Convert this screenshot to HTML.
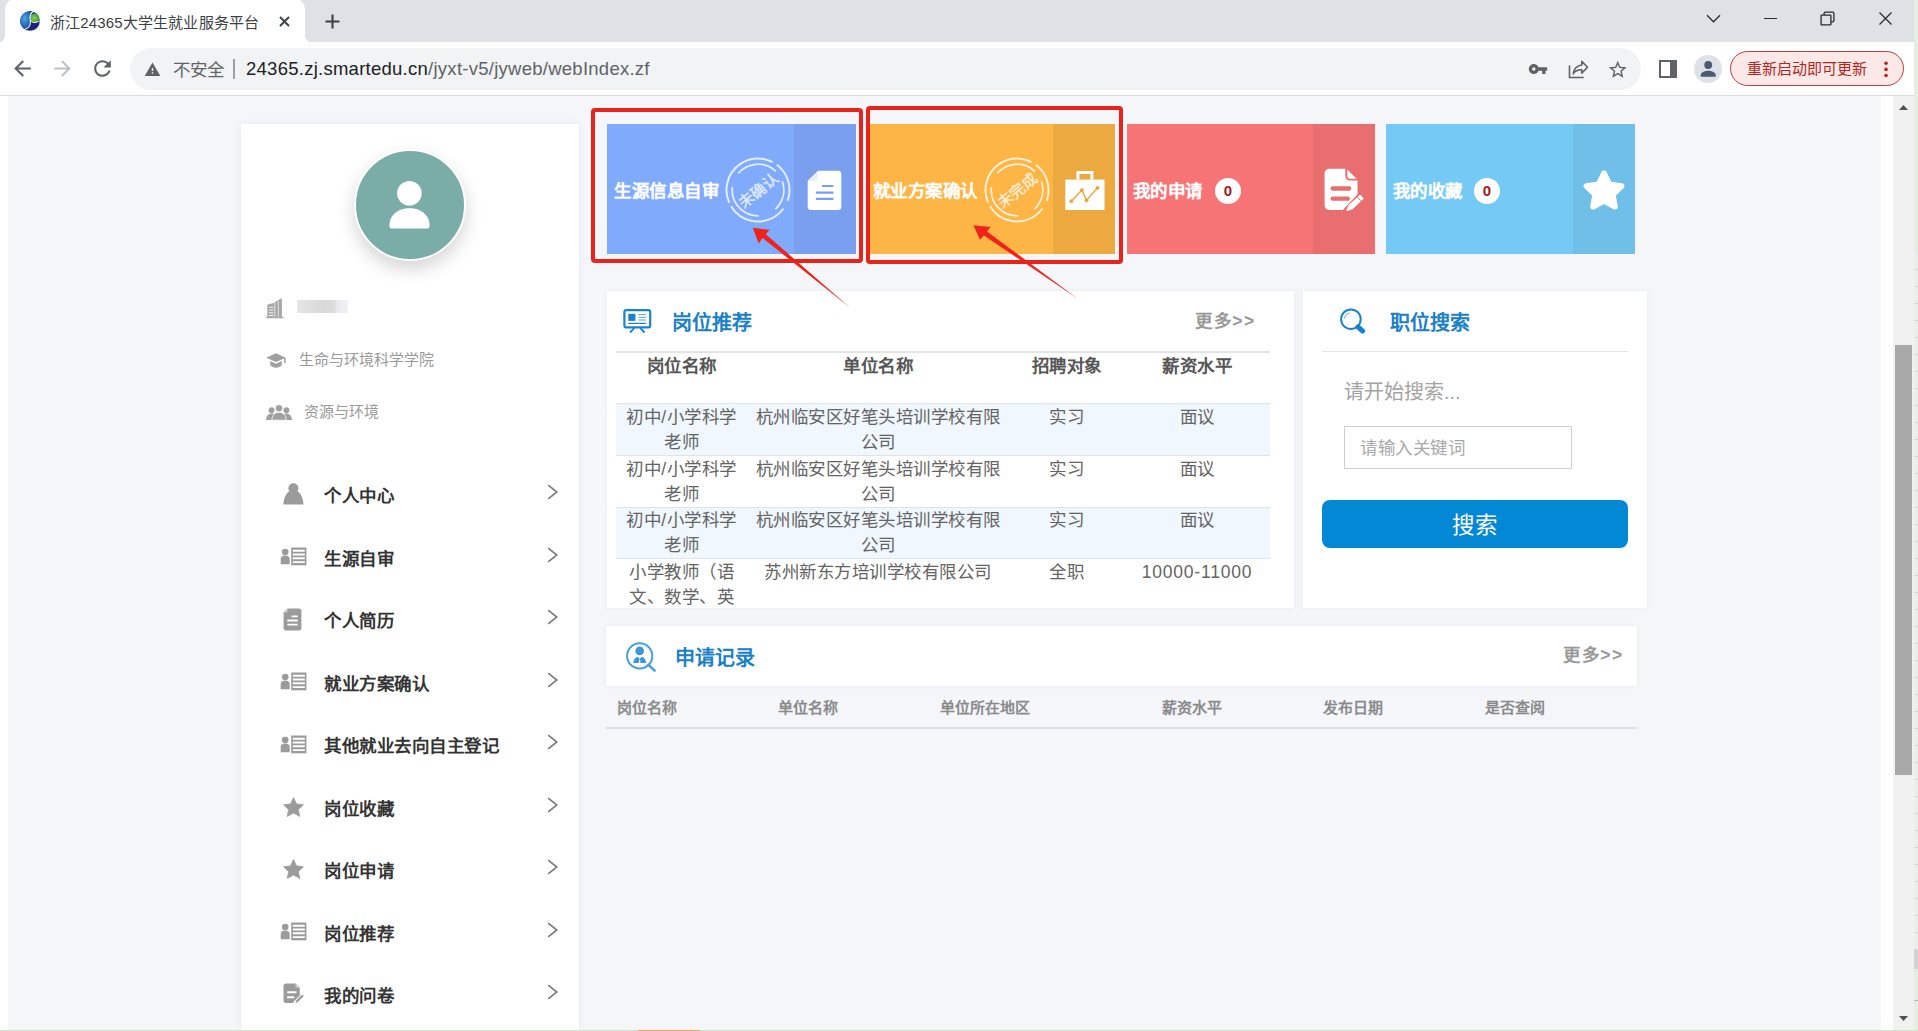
<!DOCTYPE html>
<html lang="zh-CN">
<head>
<meta charset="utf-8">
<title>浙江24365大学生就业服务平台</title>
<style>
*{box-sizing:border-box}
html,body{margin:0;padding:0}
body{width:1918px;height:1031px;overflow:hidden;position:relative;background:#fff;font-family:"Liberation Sans",sans-serif;color:#333}
.abs{position:absolute}
svg{display:block;position:absolute;overflow:visible}

/* ---------- browser chrome ---------- */
#tabstrip{left:0;top:0;width:1914px;height:43px;background:#dee1e6}
#tab{left:5px;top:-1px;width:300px;height:44px;background:#fff;border-radius:10px 10px 0 0}
#tab:before,#tab:after{content:"";position:absolute;bottom:0;width:8px;height:8px}
#tab:before{left:-8px;background:radial-gradient(circle at 0 0,transparent 7.5px,#fff 8.5px)}
#tab:after{right:-8px;background:radial-gradient(circle at 100% 0,transparent 7.5px,#fff 8.5px)}
#tabtitle{left:50px;top:13px;font-size:15px;letter-spacing:.15px;line-height:20px;color:#3c4043;white-space:nowrap}
#toolbar{left:0;top:42px;width:1914px;height:53px;background:#fff}
#tbline{left:0;top:95px;width:1914px;height:1px;background:#dcdcdc}
#omni{left:130px;top:48px;width:1511px;height:42px;border-radius:21px;background:#f1f3f4}
#insecure{left:173px;top:59px;font-size:17.5px;line-height:22px;color:#5f6368;white-space:nowrap}
#url{left:246px;top:57px;font-size:18.5px;line-height:24px;letter-spacing:.26px;color:#202124;white-space:nowrap}
#url span{color:#5f6368}
#avatarbtn{left:1694px;top:55px;width:28px;height:28px;border-radius:50%;background:#dee1e6}
#update{left:1730px;top:51px;width:174px;height:35px;border-radius:18px;border:1.5px solid #b8403b;background:#fce8e6}
#updatetxt{left:1747px;top:59px;font-size:15px;line-height:20px;color:#b3261e;white-space:nowrap}
#rightstrip{left:1914px;top:0;width:4px;height:1031px;background:#e4efdf}
#rightstrip2{left:1914px;top:253.400px;width:4px;height:697px;background:repeating-linear-gradient(180deg,#eceeec 0,#eceeec 16px,#d4d6d4 16px,#d4d6d4 17px)}
#bottomstrip{left:0;top:1029.500px;width:1918px;height:1.500px;background:#d4e6c8}

/* ---------- page ---------- */
#page{left:0;top:96px;width:1914px;height:935px;background:#fff;overflow:hidden}
#pagebg{left:8px;top:0;width:1873px;height:935px;background:#f4f6fa}
#sbtrack{left:1893px;top:0;width:21px;height:935px;background:#f1f1f1}
#sbthumb{left:1895px;top:249px;width:17px;height:430px;background:#a8a8a8}

/* sidebar */
#side{left:241px;top:124px;width:338px;height:910px;background:#fff;box-shadow:0 0 6px rgba(100,120,135,.11)}
#avatar{left:113px;top:25px;width:112px;height:112px;border-radius:50%;background:#7aada8;border:2px solid #fff;box-shadow:0 8px 18px rgba(0,0,0,.17)}
.info{left:58px;font-size:15px;line-height:20px;color:#999;white-space:nowrap}
#redact{left:56px;top:176px;width:51px;height:13px;background:linear-gradient(90deg,#e6e6e6 0,#dedede 28%,#d9d9d9 52%,#dddcdc 74%,#e9e9ee 78%,#f1f1f5 100%)}
.mi{left:0;width:338px;height:62px}
.mi .t{position:absolute;left:83px;top:22px;letter-spacing:.5px;font-size:17.5px;line-height:22px;font-weight:bold;color:#333;white-space:nowrap}

/* cards */
.card{top:124px;height:130px;width:250px}
.card .dk{position:absolute;right:0;top:0;width:62px;height:130px}
.card .t{position:absolute;left:7px;top:55.600px;letter-spacing:.5px;font-size:17.5px;line-height:22px;font-weight:bold;color:#fff;white-space:nowrap;text-shadow:0 0 1px rgba(255,255,255,.6)}
.badge{position:absolute;top:53.500px;width:26px;height:26px;border-radius:50%;background:#fff;color:#a4191c;font-weight:bold;font-size:15px;line-height:26px;text-align:center}
.redbox{border:4.400px solid #e8231c;border-radius:4px}

/* panels */
.panel{background:#fff;box-shadow:0 0 4px rgba(100,120,135,.09)}
.ptitle{font-size:20px;line-height:26px;font-weight:bold;color:#1b80c4;white-space:nowrap}
.more{font-size:17.5px;line-height:22px;font-weight:bold;color:#999;white-space:nowrap;letter-spacing:1.6px}
#jobs table{position:absolute;left:9px;top:59.7px;width:654px;border-collapse:collapse;table-layout:fixed;border-top:2px solid #e4e4e4}
#jobs th{font-size:17.5px;line-height:25px;letter-spacing:.5px;font-weight:bold;color:#555;height:52px;vertical-align:top;padding:1px 0 0;text-align:center}
#jobs td{font-size:17.5px;line-height:25px;letter-spacing:.5px;color:#646464;vertical-align:top;padding:.7px 6px 0;text-align:center;border-top:1px solid #dde3ea;height:51.2px}
#jobs tr.sh td{background:#f0f7fe}
#rec th{position:absolute;top:0}
.rh{top:697.5px;font-size:15px;line-height:20px;font-weight:bold;color:#8a8a8a;white-space:nowrap}
</style>
</head>
<body>

<!-- browser chrome -->
<div id="tabstrip" class="abs"></div>
<div id="tab" class="abs"></div>
<div id="tabtitle" class="abs">浙江24365大学生就业服务平台</div>
<div id="toolbar" class="abs"></div>
<div id="tbline" class="abs"></div>
<div id="omni" class="abs"></div>
<div id="insecure" class="abs">不安全</div>
<div id="url" class="abs">24365.zj.smartedu.cn<span>/jyxt-v5/jyweb/webIndex.zf</span></div>
<div id="avatarbtn" class="abs"></div>
<div id="update" class="abs"></div>
<div id="updatetxt" class="abs">重新启动即可更新</div>


<!-- chrome icons -->
<svg style="left:20px;top:11px" width="20" height="20" viewBox="0 0 20 20">
  <defs>
    <radialGradient id="fg1" cx="35%" cy="40%" r="60%"><stop offset="0" stop-color="#4aa8e8"/><stop offset="1" stop-color="#164f9c"/></radialGradient>
    <radialGradient id="fg2" cx="45%" cy="50%" r="60%"><stop offset="0" stop-color="#8fd04a"/><stop offset="1" stop-color="#2f9a2f"/></radialGradient>
  </defs>
  <rect x="0" y="0" width="20" height="20" fill="#f4f5fb"/>
  <circle cx="10" cy="10" r="9.8" fill="#1c2478"/>
  <path d="M12.8.6C6.5-1 .2 3.600 .2 10c0 3.400 1.700 6.300 4.600 8.100 2.500-.6 4.200-2.300 4.800-4.700.5-2.200-.6-4.400 0-6.600C10.200 4.100 11.300 1.800 12.800.6z" fill="url(#fg1)"/>
  <circle cx="14.6" cy="7" r="4.6" fill="url(#fg2)"/>
  <path d="M13.200.5C11 2 10 4.300 10 6.800c0 2.100.7 4 .2 6.200-.5 2.300-2.200 4.300-5.200 5.300" fill="none" stroke="#fff" stroke-width="1.100"/>
  <path d="M10.300 9.200c1.400 2.300 4.600 3.400 9.300.7" fill="none" stroke="#fff" stroke-width="1"/>
</svg>
<svg style="left:279px;top:16px" width="11" height="11" viewBox="0 0 11 11"><path d="M1 1l9 9M10 1l-9 9" stroke="#3c4043" stroke-width="1.900" fill="none"/></svg>
<svg style="left:325px;top:14px" width="15" height="15" viewBox="0 0 15 15"><path d="M7.500 .5v14M.5 7.500h14" stroke="#3c4043" stroke-width="2.100" fill="none"/></svg>
<svg style="left:10px;top:56px" width="25" height="25" viewBox="0 0 24 24"><path fill="#5f6368" d="M20 11H7.830l5.590-5.590L12 4l-8 8 8 8 1.410-1.410L7.830 13H20v-2z"/></svg>
<svg style="left:50px;top:56px" width="25" height="25" viewBox="0 0 24 24"><path fill="#bdc1c6" d="M12 4l-1.410 1.410L16.170 11H4v2h12.170l-5.580 5.590L12 20l8-8z"/></svg>
<svg style="left:90px;top:56px" width="25" height="25" viewBox="0 0 24 24"><path fill="#5f6368" d="M17.650 6.350C16.200 4.900 14.210 4 12 4c-4.420 0-7.990 3.580-7.990 8s3.570 8 7.990 8c3.730 0 6.840-2.550 7.730-6h-2.080c-.82 2.330-3.040 4-5.650 4-3.310 0-6-2.690-6-6s2.690-6 6-6c1.660 0 3.140.69 4.220 1.780L13 11h7V4l-2.350 2.350z"/></svg>
<svg style="left:144px;top:61px" width="17" height="17" viewBox="0 0 24 24"><path fill="#5f6368" d="M1 21h22L12 2 1 21zm12-3h-2v-2h2v2zm0-4h-2v-4h2v4z"/></svg>
<div class="abs" style="left:233px;top:59px;width:2px;height:20px;background:#9aa0a6"></div>
<svg style="left:1528px;top:59px" width="20" height="20" viewBox="0 0 24 24"><path fill="#5f6368" d="M12.650 10C11.830 7.670 9.610 6 7 6c-3.310 0-6 2.690-6 6s2.690 6 6 6c2.610 0 4.830-1.670 5.650-4H17v4h4v-4h2v-4H12.650zM7 14c-1.100 0-2-.9-2-2s.9-2 2-2 2 .9 2 2-.9 2-2 2z"/></svg>
<svg style="left:1568px;top:60px" width="21" height="19" viewBox="0 0 21 19"><path d="M1.500 5.500v12h14.200" fill="none" stroke="#5f6368" stroke-width="1.600"/><path d="M13.800 1.300l5.700 5.900-5.700 5.900V9.800c-4-.1-6.700 1.100-8.600 4 .6-4.600 3.300-8.100 8.600-8.800z" fill="none" stroke="#5f6368" stroke-width="1.600" stroke-linejoin="round"/></svg>
<svg style="left:1607px;top:59px" width="21.500" height="21.500" viewBox="0 0 24 24"><path fill="#5f6368" d="M22 9.240l-7.190-.62L12 2 9.190 8.630 2 9.240l5.460 4.730L5.820 21 12 17.270 18.180 21l-1.630-7.030L22 9.240zM12 15.400l-3.760 2.270 1-4.280-3.320-2.880 4.380-.38L12 6.100l1.710 4.040 4.380.38-3.320 2.880 1 4.280L12 15.400z"/></svg>
<div class="abs" style="left:1659px;top:60px;width:18px;height:17.500px;border:2.200px solid #5f6368;border-right-width:7px"></div>
<svg style="left:1694px;top:55px" width="28" height="28" viewBox="0 0 28 28"><circle cx="14.200" cy="10" r="3.900" fill="#4a5a72"/><path d="M6.700 21.700v-1.700c0-2.800 5-4.200 7.500-4.200s7.500 1.400 7.500 4.200v1.700z" fill="#4a5a72"/></svg>
<svg style="left:1883px;top:61px" width="6" height="17" viewBox="0 0 6 17"><circle cx="3" cy="2.300" r="1.800" fill="#b3261e"/><circle cx="3" cy="8.400" r="1.800" fill="#b3261e"/><circle cx="3" cy="14.500" r="1.800" fill="#b3261e"/></svg>
<svg style="left:1706px;top:14px" width="15" height="9" viewBox="0 0 15 9"><path d="M1 1.300l6.500 6.500L14 1.300" fill="none" stroke="#2b2b2b" stroke-width="1.300"/></svg>
<div class="abs" style="left:1764px;top:18px;width:13px;height:1.300px;background:#2b2b2b"></div>
<svg style="left:1820px;top:11px" width="15" height="15" viewBox="0 0 15 15"><rect x="1.100" y="4.100" width="9.800" height="9.800" rx=".6" fill="none" stroke="#2b2b2b" stroke-width="1.300"/><path d="M4.100 4V2.400c0-.7.600-1.300 1.300-1.300h7.200c.7 0 1.300.6 1.300 1.300v7.200c0 .7-.6 1.300-1.300 1.300H11" fill="none" stroke="#2b2b2b" stroke-width="1.300"/></svg>
<svg style="left:1879px;top:12px" width="13" height="13" viewBox="0 0 13 13"><path d="M.5.5l12 12M12.500.5l-12 12" stroke="#2b2b2b" stroke-width="1.300" fill="none"/></svg>

<!-- page -->
<div id="page" class="abs">
  <div id="pagebg" class="abs"></div>
  <div id="sbtrack" class="abs"></div>
  <div id="sbthumb" class="abs"></div>
</div>


<!-- sidebar -->
<div id="side" class="abs">
  <div id="avatar" class="abs"></div>
  <div id="redact" class="abs"></div>
  <svg style="left:115px;top:27px" width="108" height="108" viewBox="0 0 108 108"><circle cx="53.400" cy="42.200" r="12.300" fill="#fff"/><path d="M33.500 75.500c-.8-10.500 8-18.200 20-18.200s20.800 7.700 20 18.200c-.1 1.300-1.200 2.100-2.500 2.100h-35c-1.300 0-2.400-.8-2.500-2.100z" fill="#fff"/></svg>
  <svg style="left:25px;top:174px" width="19" height="21" viewBox="0 0 19 21"><path d="M8 4.800L14.800.6c.5-.3 1.100 0 1.100.6v17.600h1.500v1.400H.3v-1.400h1V7.400c0-.5.400-1 .9-1.100L8 5z" fill="#a6a6a6"/><path d="M8.800 4.600v14.400M12.300 2.800v16" stroke="#fff" stroke-width=".7"/><path d="M2.800 9.200h4.600M2.800 12h4.600M2.800 14.800h4.600M2.800 17.500h4.600" stroke="#fff" stroke-width=".9"/></svg>
  <svg style="left:25px;top:229px" width="21" height="16" viewBox="0 0 21 16"><path d="M10 .3L.2 4.700 10 9.100l8.200-3.700v4.500h1.500V4.700z" fill="#a0a0a0"/><path d="M4.200 8.100v3.900c1.200 1.800 3.400 2.800 5.800 2.800s4.600-1 5.800-2.800V8.100L10 10.700z" fill="#a0a0a0"/></svg>
  <svg style="left:25px;top:280px" width="26" height="17" viewBox="0 0 26 17"><circle cx="5.600" cy="6.200" r="2.900" fill="#a0a0a0"/><circle cx="20.400" cy="6.200" r="2.900" fill="#a0a0a0"/><path d="M0 16c.3-4 2.400-6.400 5.600-6.400 1.700 0 3 .6 4 1.800L8 16zM26 16c-.3-4-2.400-6.400-5.600-6.400-1.700 0-3 .6-4 1.800L18 16z" fill="#a0a0a0"/><circle cx="13" cy="4.300" r="3.700" fill="#a0a0a0" stroke="#fff" stroke-width=".8"/><path d="M5.800 16.200c.3-5 3-8 7.200-8s6.900 3 7.200 8z" fill="#a0a0a0" stroke="#fff" stroke-width=".8"/></svg>
  <svg style="left:42px;top:359px" width="21" height="22" viewBox="0 0 21 22"><circle cx="10.400" cy="5.200" r="5" fill="#9b9b9b"/><path d="M.4 21.400c0-6.500 3.600-12.200 6.200-13.400h7.600c2.600 1.200 6.200 6.900 6.200 13.400z" fill="#9b9b9b"/></svg>
<svg style="left:39px;top:423px" width="27" height="19" viewBox="0 0 27 19"><circle cx="5.200" cy="5" r="3.300" fill="#9b9b9b"/><path d="M.7 17.300v-5.300c0-2 1.600-3.400 4.500-3.400s4.500 1.400 4.500 3.400v5.300z" fill="#9b9b9b"/><rect x="11.200" y=".5" width="15.200" height="17.800" fill="#9b9b9b"/><path d="M12.800 3.700h12M12.800 7.500h12M12.800 11.300h12M12.800 15.100h12" stroke="#fff" stroke-width="1.900"/></svg>
  <svg style="left:42px;top:484px" width="19" height="23" viewBox="0 0 19 23"><path d="M4.600 .6h11.600c1.200 0 2.200 1 2.200 2.200v17.400c0 1.200-1 2.200-2.200 2.200H2.800c-1.200 0-2.200-1-2.200-2.200V4.600z" fill="#9b9b9b"/><path d="M.6 4.600h2.800c.7 0 1.200-.5 1.200-1.200V.6" fill="#c8c8c8"/><path d="M8.500 8.400h6.200M4.300 12.500h10.400M4.300 16.600h10.400" stroke="#fff" stroke-width="1.900"/></svg>
<svg style="left:39px;top:548px" width="27" height="19" viewBox="0 0 27 19"><circle cx="5.200" cy="5" r="3.300" fill="#9b9b9b"/><path d="M.7 17.300v-5.300c0-2 1.600-3.400 4.500-3.400s4.500 1.400 4.500 3.400v5.300z" fill="#9b9b9b"/><rect x="11.200" y=".5" width="15.200" height="17.800" fill="#9b9b9b"/><path d="M12.800 3.700h12M12.800 7.500h12M12.800 11.300h12M12.800 15.100h12" stroke="#fff" stroke-width="1.900"/></svg><svg style="left:39px;top:610.5px" width="27" height="19" viewBox="0 0 27 19"><circle cx="5.200" cy="5" r="3.300" fill="#9b9b9b"/><path d="M.7 17.300v-5.300c0-2 1.600-3.400 4.500-3.400s4.500 1.400 4.500 3.400v5.300z" fill="#9b9b9b"/><rect x="11.200" y=".5" width="15.200" height="17.800" fill="#9b9b9b"/><path d="M12.800 3.700h12M12.800 7.500h12M12.800 11.300h12M12.800 15.100h12" stroke="#fff" stroke-width="1.900"/></svg><svg style="left:42px;top:672.5px" width="21" height="20" viewBox="0 0 21 20"><path d="M10.500 .6l3 6.300 6.900.9-5 4.800 1.300 6.800-6.200-3.400-6.200 3.400 1.300-6.800-5-4.800 6.900-.9z" fill="#9b9b9b" stroke="#9b9b9b" stroke-width=".8" stroke-linejoin="round"/></svg><svg style="left:42px;top:735px" width="21" height="20" viewBox="0 0 21 20"><path d="M10.500 .6l3 6.300 6.900.9-5 4.800 1.300 6.800-6.200-3.400-6.200 3.400 1.300-6.800-5-4.800 6.900-.9z" fill="#9b9b9b" stroke="#9b9b9b" stroke-width=".8" stroke-linejoin="round"/></svg><svg style="left:39px;top:798px" width="27" height="19" viewBox="0 0 27 19"><circle cx="5.200" cy="5" r="3.300" fill="#9b9b9b"/><path d="M.7 17.300v-5.300c0-2 1.600-3.400 4.500-3.400s4.500 1.400 4.500 3.400v5.300z" fill="#9b9b9b"/><rect x="11.200" y=".5" width="15.200" height="17.800" fill="#9b9b9b"/><path d="M12.800 3.700h12M12.800 7.500h12M12.800 11.300h12M12.800 15.100h12" stroke="#fff" stroke-width="1.900"/></svg>
  <svg style="left:42px;top:859px" width="21" height="22" viewBox="0 0 21 22"><path d="M3 .5h9.500l4.300 4.300v7.700l-6.300 6.300v1.200H3c-1.400 0-2.500-1.100-2.500-2.500V3C.5 1.600 1.600.5 3 .5z" fill="#9b9b9b"/><path d="M12.500 .5v3.100c0 .7.500 1.200 1.200 1.200h3.100z" fill="#d0d0d0"/><path d="M4.200 9.300h9.200M4.200 14.300h7" stroke="#fff" stroke-width="2"/><path d="M12 20.700l1-3.400 6-6 2 2-6 6z" fill="#9b9b9b" stroke="#fff" stroke-width=".7"/></svg>
<svg style="left:306px;top:360.2px" width="12" height="16" viewBox="0 0 12 16"><path d="M1.200 1.200l8.600 6.800-8.600 6.800" fill="none" stroke="#7a7a7a" stroke-width="1.600"/></svg><svg style="left:306px;top:422.7px" width="12" height="16" viewBox="0 0 12 16"><path d="M1.200 1.200l8.600 6.800-8.600 6.800" fill="none" stroke="#7a7a7a" stroke-width="1.600"/></svg><svg style="left:306px;top:485.2px" width="12" height="16" viewBox="0 0 12 16"><path d="M1.200 1.200l8.600 6.800-8.600 6.800" fill="none" stroke="#7a7a7a" stroke-width="1.600"/></svg><svg style="left:306px;top:547.7px" width="12" height="16" viewBox="0 0 12 16"><path d="M1.200 1.200l8.600 6.800-8.600 6.800" fill="none" stroke="#7a7a7a" stroke-width="1.600"/></svg><svg style="left:306px;top:610.2px" width="12" height="16" viewBox="0 0 12 16"><path d="M1.200 1.200l8.600 6.800-8.600 6.800" fill="none" stroke="#7a7a7a" stroke-width="1.600"/></svg><svg style="left:306px;top:672.7px" width="12" height="16" viewBox="0 0 12 16"><path d="M1.200 1.200l8.600 6.800-8.600 6.800" fill="none" stroke="#7a7a7a" stroke-width="1.600"/></svg><svg style="left:306px;top:735.2px" width="12" height="16" viewBox="0 0 12 16"><path d="M1.200 1.200l8.600 6.800-8.600 6.800" fill="none" stroke="#7a7a7a" stroke-width="1.600"/></svg><svg style="left:306px;top:797.7px" width="12" height="16" viewBox="0 0 12 16"><path d="M1.200 1.200l8.600 6.800-8.600 6.800" fill="none" stroke="#7a7a7a" stroke-width="1.600"/></svg><svg style="left:306px;top:860.2px" width="12" height="16" viewBox="0 0 12 16"><path d="M1.200 1.200l8.600 6.800-8.600 6.800" fill="none" stroke="#7a7a7a" stroke-width="1.600"/></svg>
  <div class="abs info" style="top:226px">生命与环境科学学院</div>
  <div class="abs info" style="top:278px;left:63px">资源与环境</div>
  <div class="abs mi" style="top:339px"><span class="t">个人中心</span></div>
  <div class="abs mi" style="top:401.5px"><span class="t">生源自审</span></div>
  <div class="abs mi" style="top:464px"><span class="t">个人简历</span></div>
  <div class="abs mi" style="top:526.5px"><span class="t">就业方案确认</span></div>
  <div class="abs mi" style="top:589px"><span class="t">其他就业去向自主登记</span></div>
  <div class="abs mi" style="top:651.5px"><span class="t">岗位收藏</span></div>
  <div class="abs mi" style="top:714px"><span class="t">岗位申请</span></div>
  <div class="abs mi" style="top:776.5px"><span class="t">岗位推荐</span></div>
  <div class="abs mi" style="top:839px"><span class="t">我的问卷</span></div>
</div>

<!-- cards -->
<div class="abs card" style="left:607px;width:249px;background:#80abfd"><div class="dk" style="background:#7a9fee"></div><span class="t">生源信息自审</span></div>
<div class="abs card" style="left:867px;width:248.300px;background:#fdb545"><div class="dk" style="background:#eba93f"></div><span class="t" style="left:5.5px">就业方案确认</span></div>
<div class="abs card" style="left:1127px;width:248px;background:#f67476"><div class="dk" style="background:#e96e70"></div><span class="t" style="left:5.5px">我的申请</span><span class="badge" style="left:88px">0</span></div>
<div class="abs card" style="left:1386px;width:249px;background:#75caf5"><div class="dk" style="background:#6fbfe8"></div><span class="t" style="left:6.5px">我的收藏</span><span class="badge" style="left:88px">0</span></div>

<!-- job recommendations -->
<div id="jobs" class="abs panel" style="left:607px;top:291px;width:687px;height:317px;overflow:hidden">
  <div class="abs ptitle" style="left:64.500px;top:19px">岗位推荐</div>
  <div class="abs more" style="left:588px;top:18.800px">更多&gt;&gt;</div>
  <table>
    <colgroup><col style="width:131px"><col style="width:262px"><col style="width:115px"><col style="width:146px"></colgroup>
    <tr><th>岗位名称</th><th>单位名称</th><th>招聘对象</th><th>薪资水平</th></tr>
    <tr class="sh"><td>初中/小学科学老师</td><td>杭州临安区好笔头培训学校有限公司</td><td>实习</td><td>面议</td></tr>
    <tr><td>初中/小学科学老师</td><td>杭州临安区好笔头培训学校有限公司</td><td>实习</td><td>面议</td></tr>
    <tr class="sh"><td>初中/小学科学老师</td><td>杭州临安区好笔头培训学校有限公司</td><td>实习</td><td>面议</td></tr>
    <tr><td>小学教师（语文、数学、英语）</td><td>苏州新东方培训学校有限公司</td><td>全职</td><td style="letter-spacing:.8px">10000-11000</td></tr>
  </table>
</div>

<!-- job search -->
<div id="search" class="abs panel" style="left:1303px;top:291px;width:344px;height:317px">
  <div class="abs ptitle" style="left:87px;top:19px">职位搜索</div>
  <div class="abs" style="left:19px;top:59.500px;width:306px;height:1.500px;background:#e6e6e6"></div>
  <div class="abs" style="left:41px;top:88px;font-size:20px;line-height:26px;color:#a3a3a3;white-space:nowrap">请开始搜索...</div>
  <div class="abs" style="left:41px;top:135px;width:228px;height:43px;border:1px solid #cfcfcf;background:#fff"></div>
  <div class="abs" style="left:57px;top:146px;font-size:17.5px;letter-spacing:.5px;line-height:22px;color:#a9a9a9;white-space:nowrap">请输入关键词</div>
  <div class="abs" style="left:19px;top:209px;width:306px;height:48px;border-radius:8px;background:#0388d6;color:#fff;font-size:22.5px;line-height:52px;text-align:center">搜索</div>
</div>

<!-- application records -->
<div id="rec" class="abs panel" style="left:606px;top:626px;width:1031px;height:60px">
  <div class="abs ptitle" style="left:68.500px;top:19px">申请记录</div>
  <div class="abs more" style="left:957px;top:18px">更多&gt;&gt;</div>
</div>
<div class="abs rh" style="left:617px">岗位名称</div>
<div class="abs rh" style="left:778px">单位名称</div>
<div class="abs rh" style="left:940px">单位所在地区</div>
<div class="abs rh" style="left:1162px">薪资水平</div>
<div class="abs rh" style="left:1323px">发布日期</div>
<div class="abs rh" style="left:1485px">是否查阅</div>
<div class="abs" style="left:606px;top:727px;width:1031px;height:2px;background:#dcdfe6"></div>


<!-- card icons -->
<svg style="left:722.5px;top:155px" width="70" height="70" viewBox="-35 -35 70 70" opacity=".78">
  <circle r="31.500" fill="none" stroke="#fff" stroke-width="2" stroke-dasharray="58 5 40 9 62 4 23" transform="rotate(-168)"/>
  <circle r="25.800" fill="none" stroke="#fff" stroke-width="1.800" stroke-dasharray="42 12 30 18 44 16" transform="rotate(-140)"/>
  <text transform="rotate(-40)" x="0" y="6" text-anchor="middle" font-family="Liberation Sans, sans-serif" font-size="15.200" letter-spacing=".3" fill="#fff" stroke="#fff" stroke-width=".35">未确认</text>
</svg><svg style="left:981.5px;top:155px" width="70" height="70" viewBox="-35 -35 70 70" opacity=".78">
  <circle r="31.500" fill="none" stroke="#fff" stroke-width="2" stroke-dasharray="58 5 40 9 62 4 23" transform="rotate(-168)"/>
  <circle r="25.800" fill="none" stroke="#fff" stroke-width="1.800" stroke-dasharray="42 12 30 18 44 16" transform="rotate(-140)"/>
  <text transform="rotate(-40)" x="0" y="6" text-anchor="middle" font-family="Liberation Sans, sans-serif" font-size="15.200" letter-spacing=".3" fill="#fff" stroke="#fff" stroke-width=".35">未完成</text>
</svg>
<svg style="left:807px;top:170px" width="35" height="41" viewBox="0 0 35 41"><path d="M11 .8h20.300c1.700 0 3 1.300 3 3v33.200c0 1.700-1.300 3-3 3H3.700c-1.700 0-3-1.300-3-3V11.100z" fill="#fff"/><path d="M.7 11.100h7.300c1.700 0 3-1.300 3-3V.8z" fill="#e9effd"/><path d="M15 16h11.500M8.900 22.700h17.600M8.900 28.900h17.600" stroke="#7a9fee" stroke-width="2.200"/></svg>
<svg style="left:1065px;top:171px" width="40" height="40" viewBox="0 0 40 40"><path d="M11.400 8.600V0h17v8.600h-3V3h-11v5.600z" fill="#fff"/><rect x=".3" y="8.600" width="39.200" height="30.400" fill="#fff"/><path d="M6.300 30.200l10.600-11.100 4.600 10.200 11-12.500" fill="none" stroke="#e9a63c" stroke-width="1.400"/><circle cx="6.300" cy="30.200" r="1.900" fill="#e9a63c"/><circle cx="16.900" cy="19.100" r="1.900" fill="#e9a63c"/><circle cx="21.500" cy="29.300" r="1.900" fill="#e9a63c"/><circle cx="32.500" cy="16.800" r="1.900" fill="#e9a63c"/></svg>
<svg style="left:1324px;top:169px" width="41" height="45" viewBox="0 0 41 45"><path d="M5.300 -.2H21.300V7.300c0 2.300 1.900 4.200 4.200 4.200h8v13.800L18.900 41H5.300C2.700 41 .6 38.900 .6 36.300V4.500C.6 1.900 2.700 -.2 5.300 -.2z" fill="#fff"/><path d="M23.300 .6l9.300 9.200H26c-1.500 0-2.700-1.200-2.700-2.700z" fill="#fff"/><path d="M8.600 19.500h16.600M8.600 29.700h15.200" stroke="#e96e70" stroke-width="4.300" stroke-linecap="round"/><g transform="translate(-.9 -1.700)"><path d="M39.900 31.300L37 28.100 26 38.200 23.800 43.200 29 41.400z" fill="#fff" stroke="#fff" stroke-width="1.200" stroke-linejoin="round"/><path d="M37.900 33.700L34.400 29.900" stroke="#e96e70" stroke-width="1"/></g></svg>
<svg style="left:1582px;top:169px" width="44" height="43" viewBox="0 0 44 43"><path d="M22 4.500l5.300 11 12.100 1.600-8.800 8.400 2.200 12-10.800-5.800-10.800 5.800 2.200-12-8.800-8.400 12.100-1.600z" fill="#fff" stroke="#fff" stroke-width="6" stroke-linejoin="round"/></svg>

<!-- panel title icons -->
<svg style="left:622px;top:308px" width="31" height="26" viewBox="0 0 31 26"><rect x="2.400" y="2.100" width="25.800" height="17.300" rx="1.800" fill="none" stroke="#1a82cc" stroke-width="2.200"/><rect x="6.300" y="5.800" width="7.100" height="7.100" fill="#1a82cc"/><path d="M16.300 6.600h7.900M16.300 9.300h7.900M16.300 12h7.900" stroke="#5aa6dc" stroke-width="1"/><path d="M6.300 15.400h17.900" stroke="#1a82cc" stroke-width="1.200"/><path d="M12.300 20.200l-4.300 4.300M18.300 20.200l4.300 4.300" stroke="#1a82cc" stroke-width="1.800"/></svg>
<svg style="left:1338px;top:307px" width="28" height="28" viewBox="0 0 28 28"><circle cx="12.900" cy="12.200" r="9.800" fill="none" stroke="#1a82cc" stroke-width="2"/><path d="M6.500 11.500c.4-3 2.600-5.100 5.400-5.500" fill="none" stroke="#7bb8e4" stroke-width="1.200"/><path d="M20 19.800l4.700 4.300" stroke="#1a82cc" stroke-width="5" stroke-linecap="round"/></svg>
<svg style="left:624px;top:640.500px" width="32" height="32" viewBox="0 0 32 32"><circle cx="15.700" cy="14.900" r="12.600" fill="none" stroke="#4b9fd8" stroke-width="2"/><path d="M24.600 24l6 5.600" stroke="#4b9fd8" stroke-width="2.600" stroke-linecap="round"/><circle cx="15.700" cy="9.900" r="4.300" fill="#3d97d4"/><path d="M9.200 22.100c.3-3.700 2.100-5.900 4.300-6.400l2.200 2.100 2.200-2.100c2.200.5 4 2.700 4.300 6.400z" fill="#3d97d4"/><path d="M15.700 17.500l.9 3.700-.9 1-.9-1z" fill="#fff"/></svg>

<!-- annotation arrows -->
<svg style="left:0;top:0" width="1918" height="1031" viewBox="0 0 1918 1031">
  <path d="M752.800 227.800L769.500 229.800 765.800 234.200 849.800 307.600 762.600 238 758.600 243.400z" fill="#f0221a"/>
  <path d="M973.400 225.300L990.600 226.900 987 231.400 1077.800 298.800 983.900 235.400 980 239.700z" fill="#f0221a"/>
</svg>

<!-- annotation boxes -->
<div class="abs redbox" style="left:591px;top:108px;width:271.500px;height:155px"></div>
<div class="abs redbox" style="left:865.500px;top:106px;width:257.500px;height:158.200px"></div>

<svg style="left:1899px;top:105px" width="9" height="5" viewBox="0 0 9 5"><path d="M0 5L4.500 0 9 5z" fill="#505050"/></svg>
<svg style="left:1899px;top:1016px" width="9" height="5" viewBox="0 0 9 5"><path d="M0 0L4.500 5 9 0z" fill="#505050"/></svg>
<div id="rightstrip" class="abs"></div>
<div id="rightstrip2" class="abs"></div>
<div class="abs" style="left:1914px;top:950px;width:4px;height:19px;background:#d2d2d2"></div>
<div class="abs" style="left:1914px;top:1000px;width:4px;height:1px;background:#b9b9b9"></div>
<div id="bottomstrip" class="abs"></div>
<div class="abs" style="left:638px;top:1030px;width:62px;height:1px;background:#f0a25a"></div>
</body>
</html>
